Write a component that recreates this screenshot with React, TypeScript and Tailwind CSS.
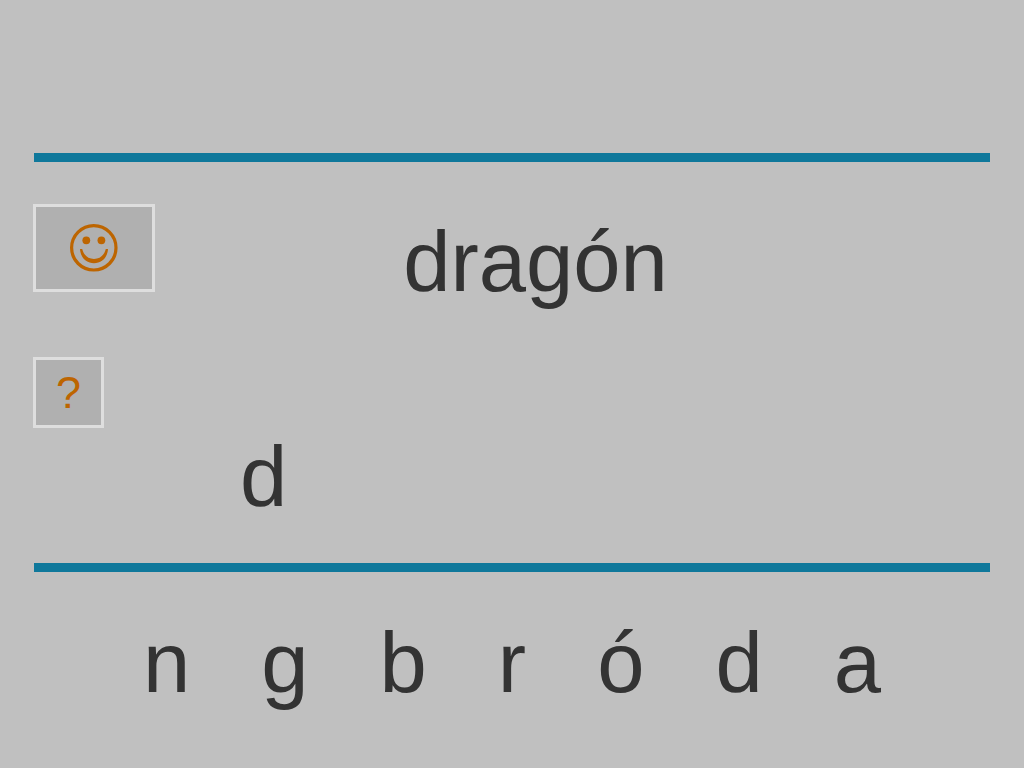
const WORD = "dragón";
const PLACED = ["d"];
const TRAY = ["n", "g", "b", "r", "ó", "d", "a"];

function Smiley() {
  return (
    <svg viewBox="0 0 48 48" className="block size-12" fill="none" aria-hidden="true">
      <circle cx="23.8" cy="23.8" r="22.2" stroke="#bd6500" strokeWidth="3.2" />
      <circle cx="16.3" cy="16.3" r="3.9" fill="#bd6500" />
      <circle cx="31.4" cy="16.3" r="3.9" fill="#bd6500" />
      <path
        d="M10 25 L12.2 25 C13.8 31.4 18 34.9 24 34.9 C30 34.9 34.2 31.4 35.8 25 L38 25 C37.4 33.8 31.6 39.2 24 39.2 C16.4 39.2 10.6 33.8 10 25 Z"
        fill="#bd6500"
      />
    </svg>
  );
}

export default function App() {
  return (
    <main className="min-h-screen bg-[#c0c0c0] pt-[153px] font-['Liberation_Sans',Arial,sans-serif] text-[85px] leading-[96px] text-[#333333]">
      <hr className="mx-[34px] h-[9px] border-0 bg-[#0f789b]" />

      <section className="flex px-[33px]">
        <div className="flex flex-col items-start gap-[65px] pt-[42px]">
          <button
            type="button"
            aria-label="☺"
            className="flex h-[88px] w-[122px] items-center justify-center border-3 border-[#dedede] bg-[#b0b0b0]"
          >
            <Smiley />
          </button>
          <button
            type="button"
            className="flex size-[71px] items-center justify-center border-3 border-[#dedede] bg-[#b0b0b0] pb-px text-[45px] leading-none text-[#bd6500]"
          >
            ?
          </button>
        </div>

        <div className="mr-[160px] ml-[85px] flex flex-1 flex-col gap-[119px] pt-[52px] pb-[38px]">
          <h1 className="text-center">{WORD}</h1>
          <div className="flex gap-[65px]">
            {PLACED.map((letter, i) => (
              <button type="button" key={i}>
                {letter}
              </button>
            ))}
          </div>
        </div>
      </section>

      <hr className="mx-[34px] h-[9px] border-0 bg-[#0f789b]" />

      <section className="flex justify-center gap-[71px] pt-[43px]">
        {TRAY.map((letter) => (
          <button type="button" key={letter}>
            {letter}
          </button>
        ))}
      </section>
    </main>
  );
}
